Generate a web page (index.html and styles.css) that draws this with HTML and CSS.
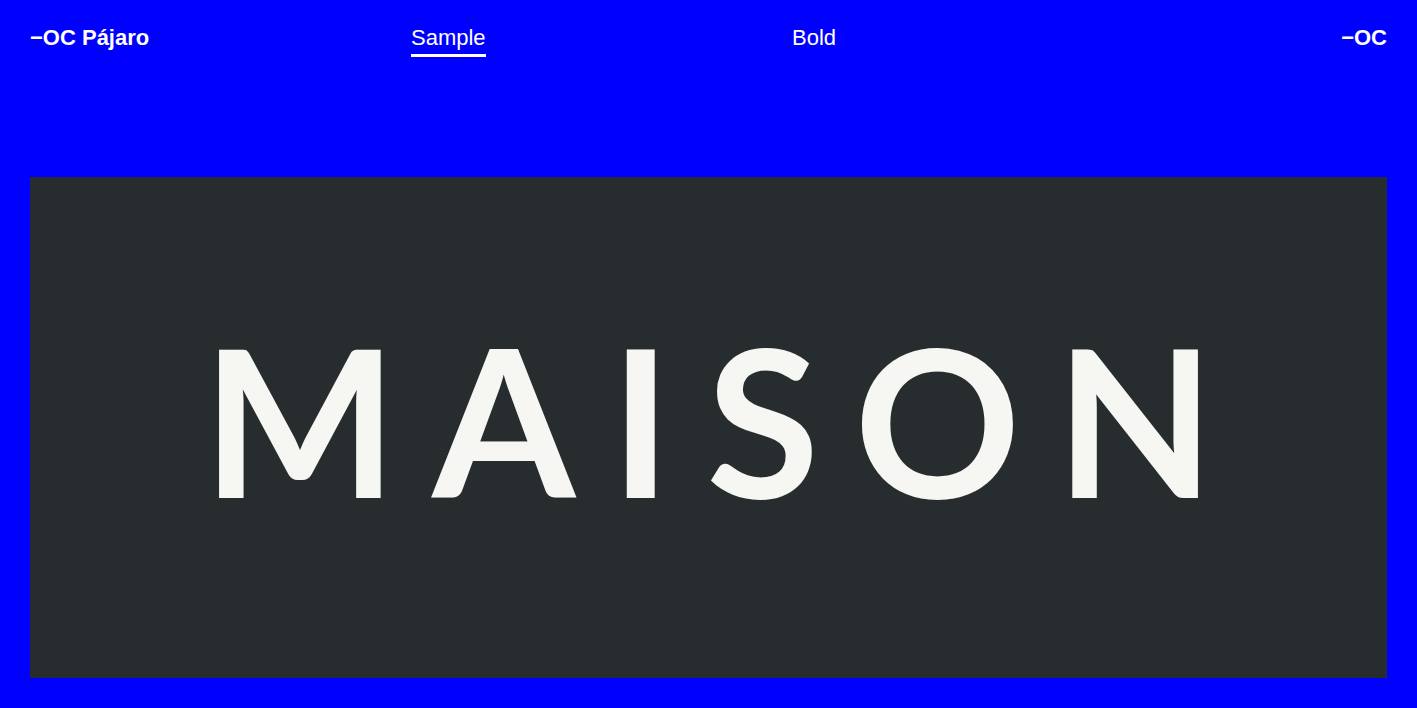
FILE: index.html
```html
<!DOCTYPE html>
<html lang="es">
<head>
<meta charset="utf-8">
<title>OC Pájaro — Sample</title>
<link rel="stylesheet" href="styles.css">
</head>
<body>
<header class="topbar">
  <a class="brand" href="#">−OC Pájaro</a>
  <a class="nav-link active" href="#">Sample</a>
  <a class="nav-link" href="#">Bold</a>
  <a class="brand end" href="#">−OC</a>
</header>
<main class="stage">
  <section class="sample">
    <h1 class="specimen">MAISON</h1>
  </section>
</main>
</body>
</html>
```
FILE: styles.css
```css
* { box-sizing: border-box; }
html, body { margin: 0; padding: 0; }
body {
  background: #0000ff;
  color: #ffffff;
  font-family: "Liberation Sans", Arial, sans-serif;
  width: 1417px;
  height: 708px;
  overflow: hidden;
}
a { color: inherit; text-decoration: none; }
.topbar {
  display: grid;
  grid-template-columns: 381px 381px 381px 1fr;
  align-items: start;
  padding: 25px 30px 0 30px;
  height: 177px;
  font-size: 22px;
  line-height: 26px;
}
.brand { font-weight: 700; justify-self: start; }
.brand.end { justify-self: end; }
.nav-link { justify-self: start; font-weight: 400; padding-bottom: 3px; }
.nav-link.active { border-bottom: 3px solid #ffffff; }
.stage { padding: 0 30px; }
.sample {
  background: #272c2e;
  height: 501px;
  display: flex;
  align-items: center;
  justify-content: center;
}
.specimen {
  margin: -18px -35px 0 0;
  color: #f6f6f2;
  font-family: Lato, sans-serif;
  font-weight: 700;
  font-size: 206px;
  line-height: 1;
  letter-spacing: 35px;
}
```
